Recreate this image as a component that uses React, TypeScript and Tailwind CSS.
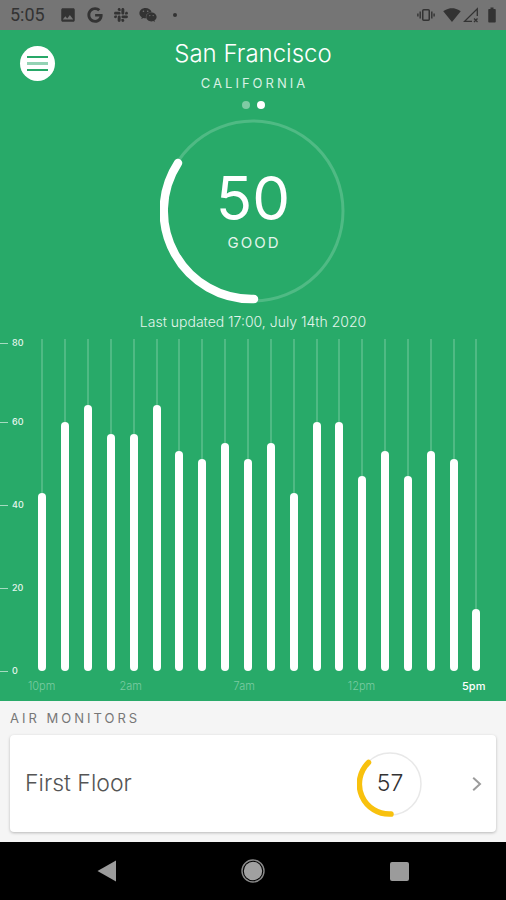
import React from "react";
import { FaGoogle, FaSlack, FaWeixin } from "react-icons/fa";
import { MdBatteryFull, MdImage, MdSignalWifi4Bar } from "react-icons/md";

const READINGS = [43, 60, 64, 57, 57, 64, 53, 51, 55, 51, 55, 43, 60, 60, 47, 53, 47, 53, 51, 15];
const SCALE_MAX = 80;

const HOURS: Record<number, string> = { 0: "10pm", 4: "2am", 9: "7am", 14: "12pm", 19: "5pm" };

const TICKS = [
  { value: 80, height: "h-2" },
  { value: 60, height: "h-[79px]" },
  { value: 40, height: "h-[83px]" },
  { value: 20, height: "h-[83px]" },
  { value: 0, height: "h-[83px]" },
];

function StatusBar() {
  return (
    <div className="flex h-[30px] items-center justify-between bg-[#757575] pr-[5px] pl-[10px] text-[#333333]">
      <div className="flex items-center">
        <span className="w-[49px] font-['Roboto',sans-serif] text-lg leading-5">5:05</span>
        <div className="flex items-center gap-[10px]">
          <MdImage className="size-[18px]" />
          <FaGoogle className="size-4" />
          <FaSlack className="size-4" />
          <FaWeixin className="size-[18px]" />
          <span className="ml-[6px] size-1 rounded-full bg-[#333333]" />
        </div>
      </div>
      <div className="flex items-center">
        <svg viewBox="0 0 18 14" className="mr-2 h-[14px] w-[18px]" fill="none" stroke="currentColor">
          <rect x="5.75" y="1.75" width="6.5" height="10.5" rx="1" strokeWidth="1.5" />
          <path d="M3.2 3.5v7M14.8 3.5v7M.9 5.5v3M17.1 5.5v3" strokeWidth="1.4" />
        </svg>
        <MdSignalWifi4Bar className="mr-[2px] size-[18px]" />
        <svg viewBox="0 0 16 16" className="mr-1 size-4" fill="none" stroke="currentColor" strokeWidth="1.3">
          <path d="M14.3 9V1.8L1.6 14.4H9" />
          <path d="M11 11.5l3.5 3.5M14.5 11.5L11 15" />
        </svg>
        <MdBatteryFull className="size-[18px]" />
      </div>
    </div>
  );
}

function Header() {
  return (
    <header className="grid grid-cols-[76px_1fr_76px]">
      <div className="pt-4 pl-5">
        <button
          type="button"
          aria-label="Open menu"
          className="flex size-[35px] flex-col items-center justify-center gap-1 rounded-full bg-white"
        >
          <span className="h-[2px] w-[21px] bg-[#28a868]" />
          <span className="h-[3px] w-[21px] bg-[#93d3b4]" />
          <span className="h-[2px] w-[21px] bg-[#28a868]" />
        </button>
      </div>
      <div className="flex flex-col items-center pt-2">
        <h1 className="text-2xl font-light text-white">San Francisco</h1>
        <p className="mt-1 pl-[3px] text-[13px] leading-[18px] tracking-[3px] text-[#d9f1e4]">CALIFORNIA</p>
        <div className="mt-[9px] flex gap-[7px]">
          <span className="size-2 rounded-full bg-[#7fcba4]" />
          <span className="size-2 rounded-full bg-white" />
        </div>
      </div>
    </header>
  );
}

function AirQualityDial() {
  return (
    <div className="mx-auto mt-[9px] grid size-[186px] place-items-center">
      <svg viewBox="0 0 186 186" className="col-start-1 row-start-1 size-full" fill="none">
        <circle cx="93" cy="93" r="90" stroke="#4fba84" strokeWidth="3" />
        <path d="M94 181A88 88 0 0 1 18 45" stroke="white" strokeWidth="8.5" strokeLinecap="round" />
      </svg>
      <div className="col-start-1 row-start-1 flex flex-col items-center pb-1 text-white">
        <span className="text-[60px] leading-[64px]">50</span>
        <span className="mt-[3px] pl-[2px] text-[15px] leading-5 tracking-[2px] text-[#e3f5ec]">GOOD</span>
      </div>
    </div>
  );
}

function ReadingsChart() {
  return (
    <div className="mt-[9px]">
      <div className="flex">
        <div className="w-[31px] shrink-0">
          {TICKS.map((tick) => (
            <div key={tick.value} className={`flex items-end ${tick.height}`}>
              <div className="flex h-2 items-center gap-1">
                <span className="h-px w-2 bg-[#a5dabf]" />
                <span className="text-[9px] leading-2 font-medium text-[#e6f6ee]">{tick.value}</span>
              </div>
            </div>
          ))}
        </div>
        <div className="mr-[18px] flex h-[332px] flex-1">
          {READINGS.map((reading, index) => (
            <div key={index} className="flex flex-1 flex-col items-center">
              <span className="w-[2px] flex-1 bg-[#4fba84]" />
              <span className="w-2 rounded-full bg-white" style={{ height: `${(reading / SCALE_MAX) * 100}%` }} />
            </div>
          ))}
        </div>
      </div>
      <div className="mr-[21px] ml-7 flex h-[26px] pt-[3px] text-[11px] leading-4 text-[#7bcaa2]">
        {READINGS.map((_, index) => (
          <span
            key={index}
            className="min-w-0 flex-1 basis-0 font-light whitespace-nowrap last:font-medium last:text-white"
          >
            {HOURS[index]}
          </span>
        ))}
      </div>
    </div>
  );
}

function MonitorCard() {
  return (
    <a
      href="#first-floor"
      className="mx-[10px] mt-2 mb-[10px] flex h-[97px] items-center rounded-sm bg-white pr-[14px] pl-[15px] shadow-[0_1px_3px_rgba(0,0,0,0.25)]"
    >
      <span className="flex-1 text-[23px] font-light text-[#555555]">First Floor</span>
      <span className="mr-[49px] grid size-[66px] place-items-center">
        <svg viewBox="0 0 66 66" className="col-start-1 row-start-1 size-full" fill="none">
          <circle cx="33" cy="33" r="31" stroke="#e8e8e8" strokeWidth="1.5" />
          <path d="M34 63A30 30 0 0 1 11.5 11.5" stroke="#f8c10e" strokeWidth="5.5" strokeLinecap="round" />
        </svg>
        <span className="col-start-1 row-start-1 text-[23px] font-light text-[#333333]">57</span>
      </span>
      <svg viewBox="0 0 10 16" className="h-4 w-[10px]" fill="none" stroke="#9b9b9b" strokeWidth="2">
        <path d="M1.2 1.7L8 8l-6.8 6.3" />
      </svg>
    </a>
  );
}

function NavigationBar() {
  return (
    <nav className="grid h-[58px] grid-cols-3 place-items-center bg-black px-[34px] text-[#9b9b9b]">
      <button type="button" aria-label="Back">
        <svg viewBox="0 0 20 22" className="h-[22px] w-5" fill="currentColor">
          <path d="M19 .5v21L.5 11z" />
        </svg>
      </button>
      <button type="button" aria-label="Home">
        <svg viewBox="0 0 24 24" className="size-6" fill="none">
          <circle cx="12" cy="12" r="11" stroke="#8a8a8a" strokeWidth="1.4" />
          <circle cx="12" cy="12" r="9.2" fill="#a0a0a0" />
        </svg>
      </button>
      <button type="button" aria-label="Recent apps">
        <span className="block size-[19px] rounded-[2px] bg-[#9b9b9b]" />
      </button>
    </nav>
  );
}

export default function App() {
  return (
    <div className="flex min-h-screen flex-col bg-[#f5f5f5] font-['Inter','Liberation_Sans',sans-serif]">
      <StatusBar />
      <section className="bg-[#28aa69]">
        <Header />
        <AirQualityDial />
        <p className="mt-[10px] text-center text-[14px] leading-4 font-light text-[#e3f5ec]">
          Last updated 17:00, July 14th 2020
        </p>
        <ReadingsChart />
      </section>
      <main className="flex-1">
        <h2 className="mt-2 ml-[10px] text-[13px] leading-[18px] tracking-[3px] text-[#777777]">AIR MONITORS</h2>
        <MonitorCard />
      </main>
      <NavigationBar />
    </div>
  );
}
